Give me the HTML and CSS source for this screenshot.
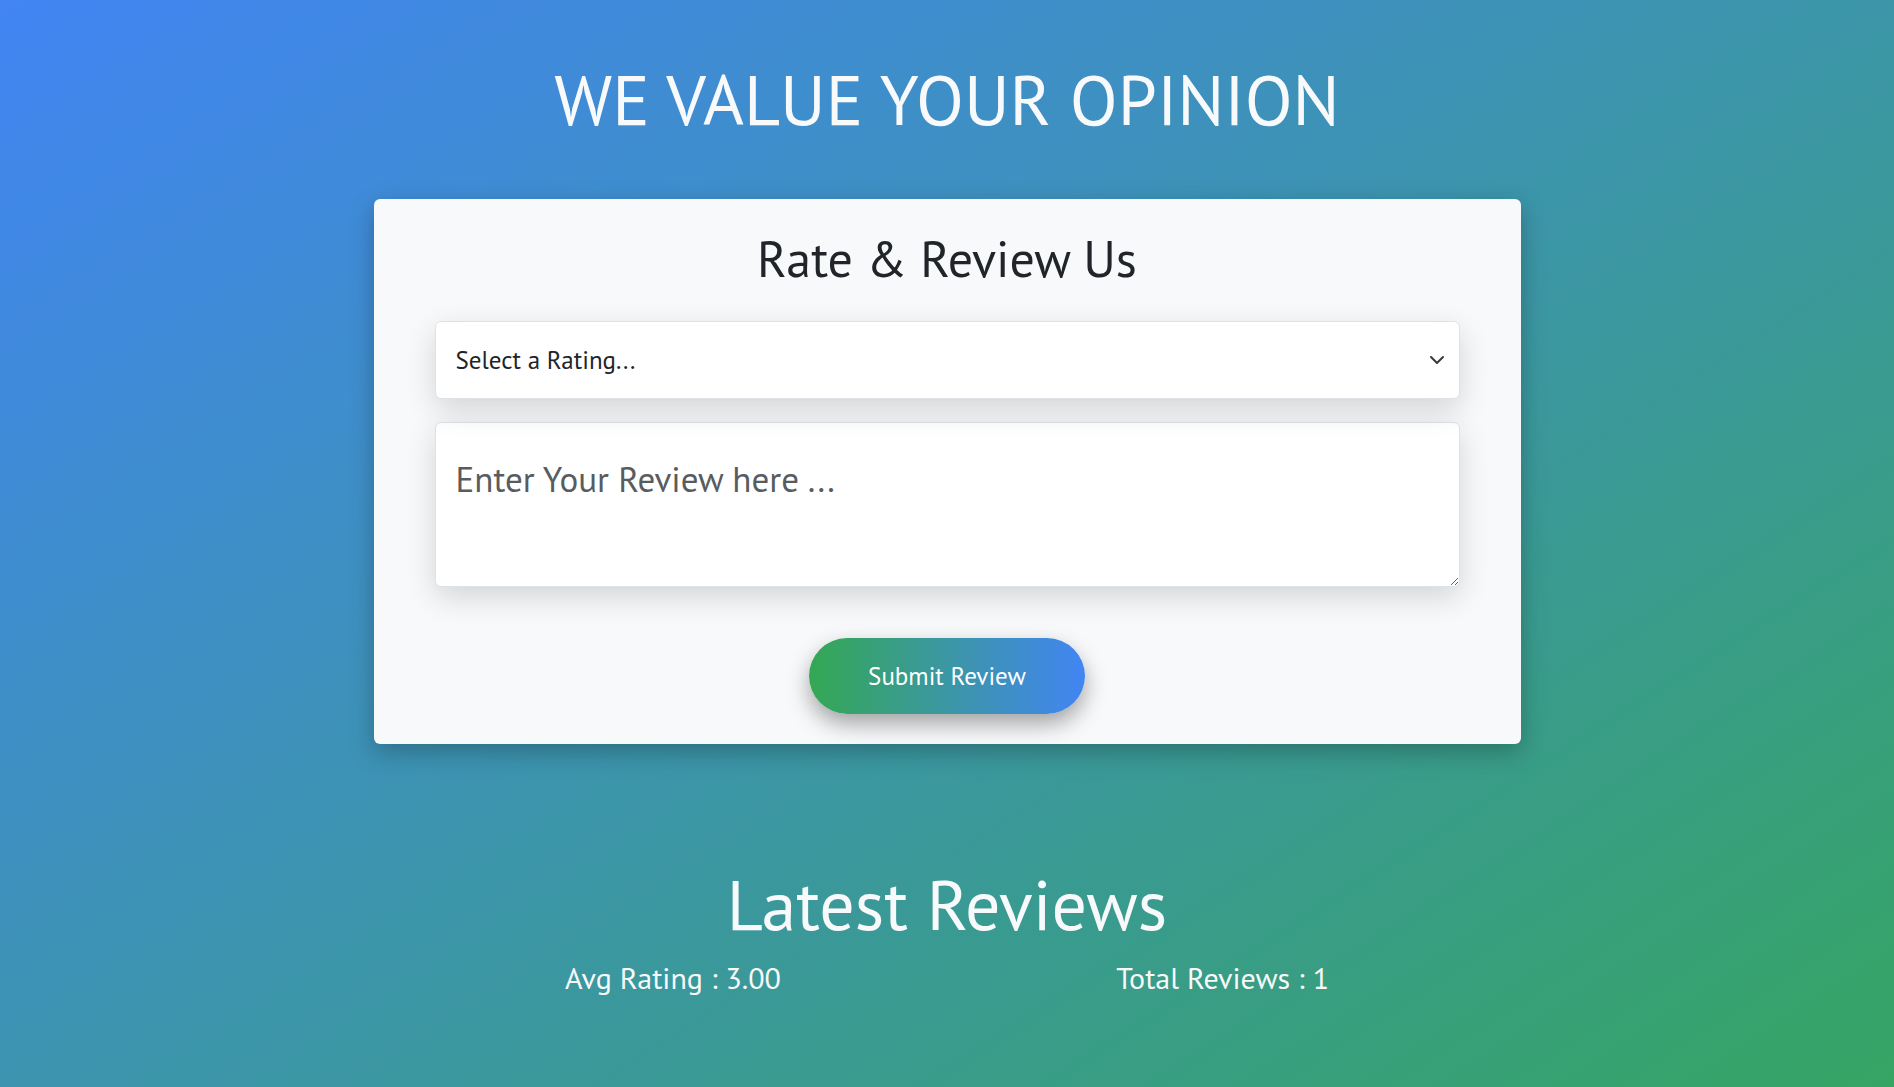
FILE: index.html
```html
<!DOCTYPE html>
<html lang="en">
<head>
  <meta charset="UTF-8" />
  <meta name="viewport" content="width=device-width, initial-scale=1" />
  <title>Rate &amp; Review</title>
  <link rel="stylesheet" href="styles.css">
</head>
<body>

<h1 class="page-title">WE VALUE YOUR OPINION</h1>

<div class="review-card">
  <h2 class="card-title">Rate &amp; Review Us</h2>

  <div class="select-wrap">
    <select class="rating-select">
      <option selected>Select a Rating...</option>
      <option>1</option>
      <option>2</option>
      <option>3</option>
      <option>4</option>
      <option>5</option>
    </select>
    <svg class="chevron" width="16" height="16" viewBox="0 0 16 16">
      <path d="M2 5l6 6 6-6" fill="none" stroke="#343a40" stroke-width="2" stroke-linecap="round" stroke-linejoin="round"/>
    </svg>
  </div>

  <textarea class="review-text" placeholder="Enter Your Review here ..."></textarea>

  <button class="submit-btn">Submit Review</button>
</div>

<h2 class="latest-title">Latest Reviews</h2>
<div class="stats">
  <span>Avg Rating : 3.00</span>
  <span>Total Reviews : 1</span>
</div>

</body>
</html>
```

FILE: styles.css
```css
html, body {
  margin: 0;
}

body {
  min-height: 100vh;
  background: linear-gradient(to bottom right, #4285f4, #34a853);
  background-size: 105% 118%;
  background-repeat: no-repeat;
  background-color: #36a560;
  font-family: "PT Sans", "Liberation Sans Narrow", "Liberation Sans", sans-serif;
  color: #f8f9fa;
  text-align: center;
  padding-top: 1px;
}

.page-title {
  font-size: 70px;
  font-weight: 400;
  margin: 56px 0 58px;
  line-height: 1.2;
}

.review-card {
  width: 1147px;
  box-sizing: border-box;
  margin: 0 auto;
  background: #f8f9fa;
  border-radius: 6px;
  padding: 30px 61px 30px;
  box-shadow: 0 8px 24px rgba(0, 0, 0, 0.25);
}

.card-title {
  color: #212529;
  font-size: 50px;
  font-weight: 400;
  margin: 0 0 32px;
  line-height: 1.2;
}

.select-wrap {
  position: relative;
}

.rating-select {
  appearance: none;
  -webkit-appearance: none;
  width: 100%;
  height: 78px;
  box-sizing: border-box;
  padding: 0 20px;
  font-family: inherit;
  font-size: 25px;
  color: #212529;
  background: #fff;
  border: 1px solid #dee2e6;
  border-radius: 6px;
  box-shadow: 0 10px 30px rgba(0, 0, 0, 0.15);
  outline: none;
}

.chevron {
  position: absolute;
  right: 15px;
  top: 31px;
}

.review-text {
  display: block;
  width: 100%;
  height: 165px;
  box-sizing: border-box;
  margin-top: 23px;
  padding: 33px 20px 20px;
  font-family: inherit;
  font-size: 35px;
  color: #212529;
  background: #fff;
  border: 1px solid #dee2e6;
  border-radius: 6px;
  box-shadow: 0 10px 30px rgba(0, 0, 0, 0.15);
  outline: none;
}

.review-text::placeholder {
  color: #595c5f;
}

.submit-btn {
  margin-top: 51px;
  width: 276px;
  height: 76px;
  border: none;
  border-radius: 38px;
  background: linear-gradient(to right, #34a853, #4285f4);
  color: #fff;
  font-family: inherit;
  font-size: 25px;
  box-shadow: 0 10px 22px rgba(0, 0, 0, 0.35);
  cursor: pointer;
}

.latest-title {
  font-size: 70px;
  font-weight: 400;
  margin: 118px 0 0;
  line-height: 1.2;
}

.stats {
  width: 764px;
  margin: 12px auto 0;
  display: flex;
  justify-content: space-between;
  font-size: 30px;
}
```
